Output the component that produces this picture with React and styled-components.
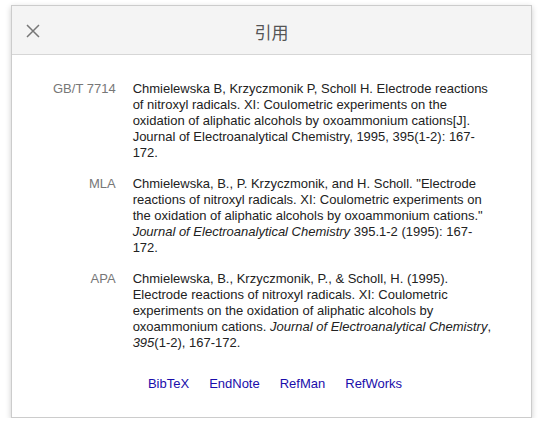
import styled, { createGlobalStyle } from "styled-components";

const GlobalStyle = createGlobalStyle`
  body {
    margin: 0;
    background: #fff;
    font-family: "Liberation Sans", Arial, sans-serif;
  }
`;

const citations = [
  {
    label: "GB/T 7714",
    text: (
      <>
        Chmielewska B, Krzyczmonik P, Scholl H. Electrode reactions of nitroxyl
        radicals. XI: Coulometric experiments on the oxidation of aliphatic
        alcohols by oxoammonium cations[J]. Journal of Electroanalytical
        Chemistry, 1995, 395(1-2): 167-172.
      </>
    ),
  },
  {
    label: "MLA",
    text: (
      <>
        Chmielewska, B., P. Krzyczmonik, and H. Scholl. "Electrode reactions of
        nitroxyl radicals. XI: Coulometric experiments on the oxidation of
        aliphatic alcohols by oxoammonium cations."{" "}
        <i>Journal of Electroanalytical Chemistry</i> 395.1-2 (1995): 167-172.
      </>
    ),
  },
  {
    label: "APA",
    text: (
      <>
        Chmielewska, B., Krzyczmonik, P., &amp; Scholl, H. (1995). Electrode
        reactions of nitroxyl radicals. XI: Coulometric experiments on the
        oxidation of aliphatic alcohols by oxoammonium cations.{" "}
        <i>Journal of Electroanalytical Chemistry</i>, <i>395</i>(1-2),
        167-172.
      </>
    ),
  },
];

const exports_ = ["BibTeX", "EndNote", "RefMan", "RefWorks"];

const App = () => {
  return (
    <>
      <GlobalStyle />
      <Dialog>
        <Header>
          <Close aria-label="close">
            <svg width="14" height="14" viewBox="0 0 14 14">
              <path d="M1 1 L13 13 M13 1 L1 13" stroke="#777" strokeWidth="1.5" />
            </svg>
          </Close>
          <Title>引用</Title>
        </Header>
        <Body>
          <CiteTable>
            {citations.map((c) => (
              <Row key={c.label}>
                <Label>{c.label}</Label>
                <Cite>{c.text}</Cite>
              </Row>
            ))}
          </CiteTable>
          <Links>
            {exports_.map((l) => (
              <Link key={l} href="#">
                {l}
              </Link>
            ))}
          </Links>
        </Body>
      </Dialog>
    </>
  );
};

const Dialog = styled.div`
  margin: 5px 0 0 11px;
  width: 519px;
  border: 1px solid #ccc;
  background: #fff;
  box-shadow: 0 2px 6px rgba(0, 0, 0, 0.2);
`;

const Header = styled.div`
  position: relative;
  height: 48px;
  background: #f4f4f4;
  border-bottom: 1px solid #d6d6d6;
  display: flex;
  align-items: center;
  justify-content: center;
`;

const Close = styled.button`
  position: absolute;
  left: 14px;
  top: 18px;
  padding: 0;
  border: none;
  background: none;
  width: 14px;
  height: 14px;
  display: flex;
`;

const Title = styled.div`
  font-family: "Noto Sans CJK SC", sans-serif;
  font-size: 17px;
  color: #555;
  margin-top: 2px;
`;

const Body = styled.div`
  padding: 26px 36px 25px 41px;
`;

const CiteTable = styled.div`
  display: grid;
  grid-template-columns: auto 1fr;
  column-gap: 17px;
`;

const Row = styled.div`
  display: contents;
`;

const Label = styled.div`
  text-align: right;
  color: #777;
  font-size: 13px;
  line-height: 16px;
  padding-bottom: 15px;
`;

const Cite = styled.div`
  color: #222;
  font-size: 13px;
  line-height: 16px;
  padding-bottom: 15px;
`;

const Links = styled.div`
  display: flex;
  justify-content: center;
  gap: 20px;
  padding-top: 10px;
  padding-left: 2px;
  font-size: 13px;
  line-height: 16px;
`;

const Link = styled.a`
  color: #1a0dab;
  text-decoration: none;
`;

export default App;
